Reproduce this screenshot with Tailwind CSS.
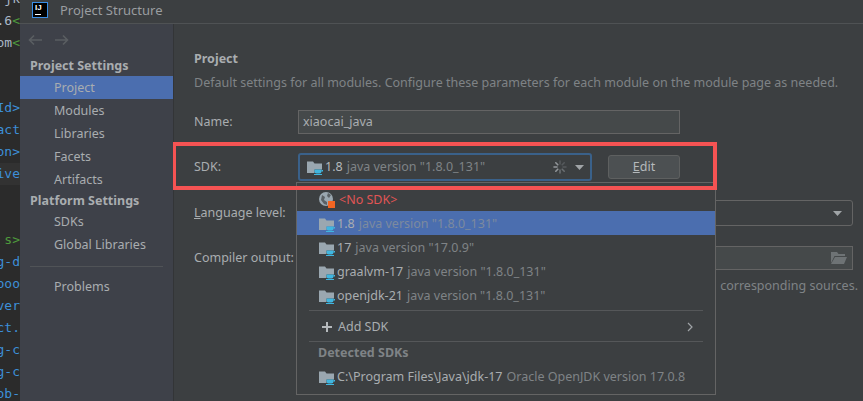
<!DOCTYPE html>
<html><head><meta charset="utf-8">
<script src="https://cdn.jsdelivr.net/npm/@tailwindcss/browser@4"></script>
</head>
<body class="w-[863px] h-[401px] overflow-hidden bg-[#3c3f41] font-['Noto_Sans',sans-serif] text-[12.5px] text-[#a9adb0]">
<svg width="0" height="0" class="absolute"><defs>
<symbol id="jdk" viewBox="0 0 16 16"><path d="M0 2.5h6l1.5 2H15v6H7.5v3.5H0z" fill="#9aa7b0"/><path d="M7.5 10.5h7v2a2 2 0 0 1-2 2h-3a2 2 0 0 1-2-2z" fill="#40b6e0"/><path d="M14.5 11h1.5v1.5h-1.5z" fill="#40b6e0"/><path d="M7 15h8v1H7z" fill="#40b6e0"/></symbol>
</defs></svg>
<div class="flex h-[401px]">
  <div class="w-5 shrink-0 bg-[#2b2b2b] overflow-hidden">
   <div class="flex flex-col items-end font-['DejaVu_Sans_Mono',monospace] text-[13px] leading-[22px] -mt-[12px] whitespace-nowrap">
    <div class="h-[22px] text-[#a9b7c6]">jk</div>
    <div class="h-[22px] text-[#a9b7c6]">.6<span class="text-[#4e9a3c]">&lt;</span></div>
    <div class="h-[22px] text-[#a9b7c6]">om<span class="text-[#4e9a3c]">&lt;</span></div>
    <div class="h-[43px]"></div>
    <div class="h-[22px] text-[#3d8fd8]">Id&gt;</div>
    <div class="h-[22px] text-[#3d8fd8]">act</div>
    <div class="h-[22px] text-[#3d8fd8]">on&gt;</div>
    <div class="h-[22px] text-[#3d8fd8] bg-[#323232] w-5 flex justify-end">ive</div>
    <div class="h-[44px]"></div>
    <div class="h-[22px] text-[#4e9a3c]">s&gt;</div>
    <div class="h-[22px] text-[#3d8fd8]">g-d</div>
    <div class="h-[22px] text-[#3d8fd8]">boo</div>
    <div class="h-[22px] text-[#3d8fd8]">ver</div>
    <div class="h-[22px] text-[#3d8fd8]">ct.</div>
    <div class="h-[22px] text-[#3d8fd8]">g-c</div>
    <div class="h-[22px] text-[#3d8fd8]">g-c</div>
    <div class="h-[22px] text-[#3d8fd8]">ob-</div>
   </div>
  </div>
  <div class="flex-1 flex flex-col min-w-0">
    <div class="h-6 shrink-0 border-b border-[#4f5254] flex items-center bg-[#3c3f41]">
      <div class="ml-3 w-4 h-4 -mt-1 border border-[#3a8ee6] bg-black relative flex items-start justify-start pl-[2px] pt-[1px]">
        <span class="font-['Liberation_Sans',sans-serif] font-bold text-[8px] leading-[8px] text-white">IJ</span>
        <span class="absolute left-[2px] bottom-[2px] w-[6px] h-px bg-white"></span>
      </div>
      <div class="ml-3 -mt-[2px] text-[13px] text-[#9a9da0]">Project Structure</div>
    </div>
    <div class="flex-1 flex min-h-0">
      <div class="w-[153px] shrink-0 bg-[#3e4149] flex flex-col">
        <div class="h-[32px] flex items-center pl-2 gap-[13px] shrink-0">
          <svg width="14" height="12" viewBox="0 0 14 12" fill="none" stroke="#5a5e62" stroke-width="1.6"><path d="M14 6H1.5M6 1.5 1.5 6 6 10.5"/></svg>
          <svg width="14" height="12" viewBox="0 0 14 12" fill="none" stroke="#5a5e62" stroke-width="1.6"><path d="M0 6h12.5M8 1.5 12.5 6 8 10.5"/></svg>
        </div>
        <div class="h-[20px] pt-[1px] pl-[10px] flex items-center font-bold text-[#a9adb0]">Project Settings</div>
        <div class="h-[23px] pt-[2px] pl-[34px] flex items-center bg-[#4b6eaf]">Project</div>
        <div class="h-[23px] pt-[2px] pl-[34px] flex items-center">Modules</div>
        <div class="h-[23px] pt-[2px] pl-[34px] flex items-center">Libraries</div>
        <div class="h-[23px] pt-[2px] pl-[34px] flex items-center">Facets</div>
        <div class="h-[23px] pt-[2px] pl-[34px] flex items-center">Artifacts</div>
        <div class="h-[20px] pl-[10px] flex items-center font-bold">Platform Settings</div>
        <div class="h-[23px] pl-[34px] flex items-center">SDKs</div>
        <div class="h-[23px] pl-[34px] flex items-center">Global Libraries</div>
        <div class="mx-[10px] mt-[9px] mb-[9px] h-px bg-[#505357]"></div>
        <div class="h-[23px] pl-[34px] flex items-center">Problems</div>
      </div>
      <div class="flex-1 relative min-w-0 pl-5 pr-[10px] border-l border-[#333537]">
        <div class="h-5 mt-[25px] flex items-center font-bold">Project</div>
        <div class="h-5 mt-[4px] flex items-center whitespace-nowrap text-[#7f8386]">Default settings for all modules. Configure these parameters for each module on the module page as needed.</div>
        <div class="flex items-center mt-[17px] h-6">
          <div class="w-[104px]">Name:</div>
          <div class="w-[382px] h-6 border border-[#646464] bg-[#45494a] px-[4px] flex items-center">xiaocai_java</div>
        </div>
        <div class="flex items-center mt-[19px] h-[28px]">
          <div class="w-[104px]">SDK:</div>
          <div class="w-[294px] h-[28px] rounded-[3px] border-[2px] border-[#3a618a] flex items-center pl-[7px] pr-[6px]">
            <svg width="16" height="16" class="shrink-0 mr-[2px]"><use href="#jdk"/></svg>
            <span class="text-[#b5b9bc]">1.8</span><span class="ml-[4px] text-[#7f8386]">java version "1.8.0_131"</span>
            <svg class="ml-auto mr-[8px]" width="14" height="14" viewBox="0 0 14 14" fill="none" stroke-width="1.6" stroke-linecap="round"><path d="M7 1v3M10 7h3M9.2 4.8l2-2" stroke="#55595c"/><path d="M7 10v3M9.2 9.2l2 2" stroke="#6a6e71"/><path d="M1 7h3M2.8 2.8l2 2M2.8 11.2l2-2" stroke="#92969a"/></svg>
            <svg width="9" height="5" viewBox="0 0 9 5"><path d="M0 0h9L4.5 5z" fill="#a0a4a7"/></svg>
          </div>
          <div class="ml-[16px] w-[72px] h-6 rounded-[3px] border border-[#5e6060] bg-[#4c5052] flex items-center justify-center text-[#b5b9bc]"><span><span class="underline">E</span>dit</span></div>
        </div>
        <div class="flex items-center mt-[19px] h-[26px]">
          <div class="w-[103px] whitespace-nowrap"><span class="underline">L</span>anguage level:</div>
          <div class="flex-1 h-[26px] rounded-[3px] border border-[#646464] flex items-center justify-end pr-[10px]">
            <svg width="9" height="5" viewBox="0 0 9 5"><path d="M0 0h9L4.5 5z" fill="#a0a4a7"/></svg>
          </div>
        </div>
        <div class="flex items-center mt-[20px] h-6">
          <div class="w-[103px] whitespace-nowrap">Compiler output:</div>
          <div class="flex-1 h-6 border border-[#646464] bg-[#45494a] flex items-center justify-end pr-[5px]">
            <svg width="16" height="14" viewBox="0 0 16 14" fill="#6e7375"><path d="M0 1h6l1.5 2H14v2H3.5L0 12z"/><path d="M4 6h12l-3 7H0z"/></svg>
          </div>
        </div>
        <div class="mt-[5px] h-5 pt-[2px] flex items-center justify-end text-[#7f8386] -mr-[5px]">corresponding sources.</div>

        <div class="absolute left-[-1px] top-[118px] w-[544px] h-[48px] border-[4px] border-l-[3px] border-[#f55353] pointer-events-none z-20"></div>
        <div class="absolute left-[122px] top-[158px] w-[420px] h-[213px] bg-[#3c3f41] border border-[#646464] z-10 pt-[4px] flex flex-col whitespace-nowrap">
          <div class="h-6 pt-[2px] pl-[22px] flex items-center shrink-0">
            <svg width="16" height="16" viewBox="0 0 16 16" class="shrink-0 mr-[4px]"><circle cx="7" cy="7" r="7" fill="#9aa7b0"/><path d="M3 3l3 2-1 3 3 2v3L5 12 2 8zM9 1l3 2-2 3-2-2z" fill="#5a6065"/><rect x="9" y="9" width="7" height="7" fill="#f26522"/></svg>
            <span class="text-[#e05555]">&lt;No SDK&gt;</span>
          </div>
          <div class="h-6 pt-[2px] pl-[22px] flex items-center bg-[#4b6eaf] shrink-0">
            <svg width="16" height="16" class="shrink-0 mr-[2px]"><use href="#jdk"/></svg><span>1.8</span><span class="ml-[4px] text-[#7d8a9e]">java version "1.8.0_131"</span>
          </div>
          <div class="h-6 pt-[2px] pl-[22px] flex items-center shrink-0">
            <svg width="16" height="16" class="shrink-0 mr-[2px]"><use href="#jdk"/></svg><span>17</span><span class="ml-[4px] text-[#7f8386]">java version "17.0.9"</span>
          </div>
          <div class="h-6 pt-[2px] pl-[22px] flex items-center shrink-0">
            <svg width="16" height="16" class="shrink-0 mr-[2px]"><use href="#jdk"/></svg><span>graalvm-17</span><span class="ml-[4px] text-[#7f8386]">java version "1.8.0_131"</span>
          </div>
          <div class="h-6 pt-[2px] pl-[22px] flex items-center shrink-0">
            <svg width="16" height="16" class="shrink-0 mr-[2px]"><use href="#jdk"/></svg><span>openjdk-21</span><span class="ml-[4px] text-[#7f8386]">java version "1.8.0_131"</span>
          </div>
          <div class="mx-[12px] mt-[3px] mb-[3px] h-px bg-[#555759] shrink-0"></div>
          <div class="h-6 pt-[2px] pl-[25px] pr-[22px] flex items-center shrink-0">
            <svg width="10" height="10" viewBox="0 0 10 10" class="mr-[6px]"><path d="M4 0h2v4h4v2H6v4H4V6H0V4h4z" fill="#b5b9bc"/></svg>
            <span>Add SDK</span>
            <svg class="ml-auto" width="6" height="10" viewBox="0 0 6 10" fill="none" stroke="#a0a4a7" stroke-width="1.2"><path d="M1 1l4 4-4 4"/></svg>
          </div>
          <div class="mx-[12px] mt-[3px] h-px bg-[#555759] shrink-0"></div>
          <div class="h-5 pt-[2px] pl-[21px] flex items-center font-bold text-[#7f8386] shrink-0">Detected SDKs</div>
          <div class="h-6 pt-[2px] mt-[2px] pl-[22px] flex items-center shrink-0">
            <svg width="16" height="16" class="shrink-0 mr-[2px]"><use href="#jdk"/></svg><span>C:\Program Files\Java\jdk-17</span><span class="ml-[4px] text-[#7f8386]">Oracle OpenJDK version 17.0.8</span>
          </div>
        </div>
      </div>
    </div>
  </div>
</div>
</body></html>
